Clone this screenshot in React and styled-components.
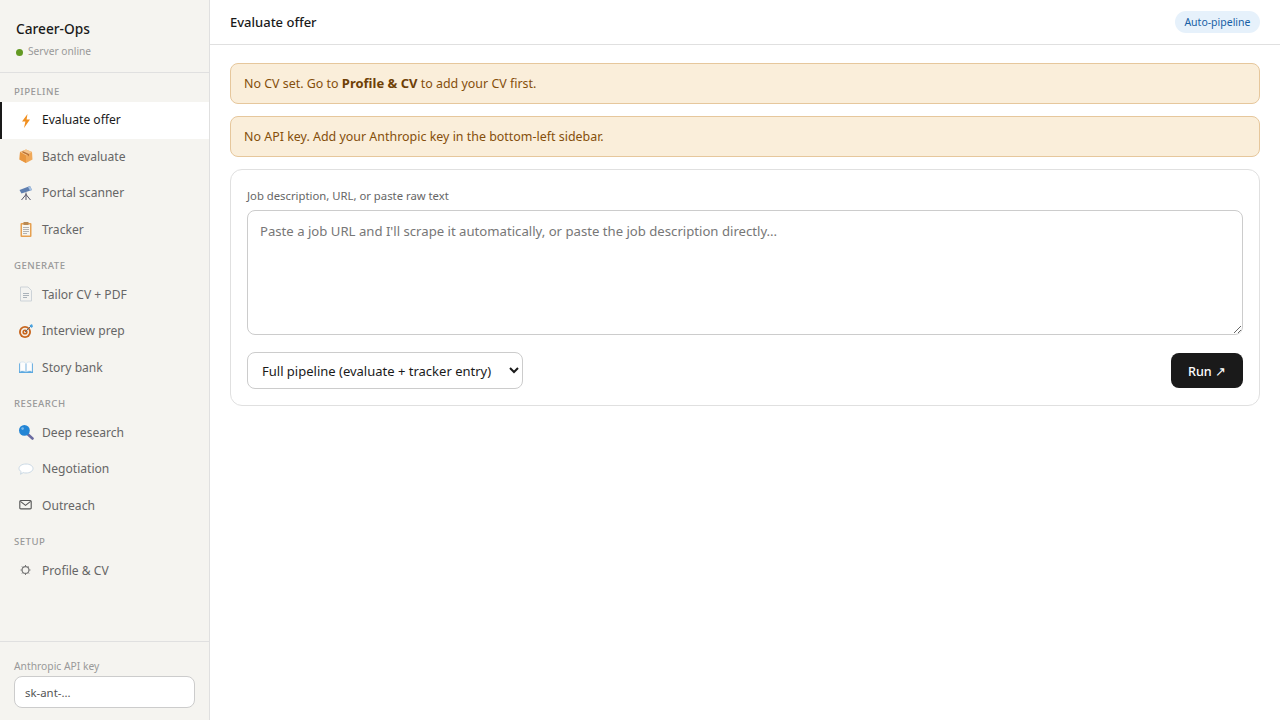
import React from 'react';
import styled, { createGlobalStyle } from 'styled-components';

const Global = createGlobalStyle`
  html, body { margin: 0; padding: 0; height: 100%; }
  body { font-family: "Noto Sans", sans-serif; background: #fff; color: #1a1a1a; }
  * { box-sizing: border-box; }
  #root { height: 720px; }
`;
const Shell = styled.div`display:flex;width:1280px;height:720px;overflow:hidden;`;
const Sidebar = styled.aside`width:210px;flex:none;background:#f5f4f0;border-right:1px solid #e0e0e0;display:flex;flex-direction:column;`;
const Brand = styled.div`padding:19px 16px 12px;height:73px;border-bottom:1px solid #e0e0e0;`;
const BrandName = styled.div`font-size:13.7px;font-weight:500;line-height:20px;`;
const Status = styled.div`display:flex;align-items:center;gap:5px;margin-top:4px;font-size:10.2px;color:#999;line-height:16px;`;
const Dot = styled.span`width:7px;height:7px;border-radius:50%;background:#639922;margin-top:2px;`;
const Nav = styled.nav`flex:1;padding-top:12.5px;`;
const Section = styled.div`font-size:9.6px;font-weight:500;letter-spacing:.5px;color:#999;padding:0 14px;line-height:12px;height:${p=>p.$first?'16.5px':'17px'};margin-top:${p=>p.$first?0:'11.5px'};`;
const Item = styled.div`height:36.5px;display:flex;align-items:center;gap:8px;padding:0 14px 1px 16px;font-size:12.1px;color:${p=>p.$active?'#1a1a1a':'#666'};background:${p=>p.$active?'#fff':'transparent'};border-left:2px solid ${p=>p.$active?'#1a1a1a':'transparent'};`;
const Icon = styled.svg`width:16px;height:16px;flex:none;display:block;`;
const Footer = styled.div`height:79px;border-top:1px solid #e0e0e0;padding:17px 14px 0;`;
const FooterLabel = styled.div`font-size:10.3px;color:#999;line-height:14px;margin-bottom:3px;`;
const KeyInput = styled.input`display:block;width:100%;height:32px;border:1px solid #ccc;border-radius:8px;background:#fff;padding:0 10px;font:11.4px "Noto Sans",sans-serif;&::placeholder{color:#555;opacity:1}`;
const Main = styled.main`flex:1;display:flex;flex-direction:column;min-width:0;`;
const Topbar = styled.header`height:45px;border-bottom:1px solid #e0e0e0;display:flex;align-items:center;justify-content:space-between;padding:0 20px;`;
const Title = styled.h1`margin:0;font-size:13px;font-weight:500;line-height:18px;`;
const Badge = styled.span`height:22px;display:flex;align-items:center;padding:0 9.5px;border-radius:11px;background:#e6f1fb;color:#185fa5;font-size:10.5px;`;
const Content = styled.div`padding:18px 20px;display:flex;flex-direction:column;gap:12px;`;
const Alert = styled.div`height:41px;padding:0 13px;background:#faeeda;border:1px solid #e6c79c;border-radius:8px;color:#854f0b;font-size:12.45px;line-height:39px;white-space:pre;`;
const Strong = styled.b`color:#6e4006;font-weight:700;font-size:13px;`;
const Card = styled.section`border:1px solid #e0e0e0;border-radius:12px;padding:16px;`;
const Label = styled.label`display:block;font-size:11.3px;color:#666;line-height:20px;margin-bottom:4px;`;
const Area = styled.textarea`display:block;width:100%;height:125px;border:1px solid #ccc;border-radius:8px;padding:11px 12px;font:13.15px "Noto Sans",sans-serif;&::placeholder{color:#777;opacity:1}`;
const Row = styled.div`display:flex;justify-content:space-between;align-items:center;margin-top:17px;`;
const Select = styled.select`width:276px;height:37px;border:1px solid #ccc;border-radius:8px;background:#fff;padding:0 10px;font:13px "Noto Sans",sans-serif;color:#1a1a1a;`;
const Run = styled.button`width:72px;height:35px;border:0;border-radius:8px;padding:1px 0 0;background:#1a1a1a;color:#fff;font:500 12.6px "Noto Sans",sans-serif;`;

const glyphs = {
  bolt: <polygon points="9.5,2 4,9.5 7.4,9.5 6,16 12,7.4 8.6,7.4" fill="#f19020"/>,
  box: <><polygon points="8,1.5 14,4 14.5,11.5 8,15 1.5,11.5 2,4" fill="#f0a95a"/><polygon points="8,1.5 14,4 8,7.5 2,4" fill="#f6c68e"/><polygon points="2,4 8,7.5 8,15 1.5,11.5" fill="#e8963f"/><polygon points="4.4,3 11,6 11,8.4 9.6,7 4.4,4.6" fill="#b9733a"/></>,
  scope: <><polygon points="1.5,5 12,1 14,5 3.5,8.5" fill="#5f7fb0"/><polygon points="10,2 12,1 14,5 12,5.7" fill="#a9c4e4"/><path d="M8 7.5V10M8 9.5L3.5 15M8 9.5L12.5 15M8 9.5V15" stroke="#55556a" strokeWidth="1" fill="none"/></>,
  clip: <><rect x="2.5" y="2" width="11" height="14" rx="1" fill="#e6a050"/><rect x="4" y="3.5" width="8" height="11" fill="#f7f5ef"/><rect x="5.5" y="1" width="5" height="3" fill="#b98a55"/><path d="M5 6.5H11M5 8.5H11M5 10.5H11M5 12.5H9" stroke="#a9a9a9" strokeWidth=".9"/></>,
  doc: <><path d="M2.5 1H10L13.5 4.5V15H2.5Z" fill="#f3f3f1" stroke="#cdd3d8"/><path d="M5 7.5H11M5 9.5H11M5 11.5H9" stroke="#aab2ba" strokeWidth="1"/></>,
  target: <><circle cx="7" cy="9" r="6" fill="#c8661e"/><circle cx="7" cy="9" r="4.2" fill="#f6efe6"/><circle cx="7" cy="9" r="2.6" fill="#c8661e"/><circle cx="7" cy="9" r="1" fill="#f6efe6"/><path d="M7 9L13 3" stroke="#5a6a80" strokeWidth="1"/><polygon points="11.5,2.5 14,1 15,3.5 13.5,5" fill="#4aa3e0"/></>,
  book: <><path d="M1 4.5C3.5 3.6 6 3.6 8 5C10 3.6 12.5 3.6 15 4.5V14H1Z" fill="#5aa8e0"/><path d="M2 3.5C4 2.6 6.4 2.8 7.6 4.2V12.8C6.2 11.8 4 11.6 2 12.4Z M14 3.5C12 2.6 9.6 2.8 8.4 4.2V12.8C9.8 11.8 12 11.6 14 12.4Z" fill="#fdfdfd" stroke="#bcd6ea" strokeWidth=".5"/></>,
  search: <><path d="M9.5 10L14.5 14.5" stroke="#6a6aa0" strokeWidth="2.6" strokeLinecap="round"/><circle cx="6.4" cy="6.4" r="5.4" fill="#2385d5"/><circle cx="4.6" cy="4.6" r="1.3" fill="#7ab9ea"/></>,
  bubble: <path d="M8 3C11.9 3 15 4.9 15 7.5S11.9 12 8 12C7 12 6 11.9 5.2 11.6L2.5 13.3L3.2 10.7C1.8 9.8 1 8.7 1 7.5C1 4.9 4.1 3 8 3Z" fill="#fff" stroke="#c5d5e2" strokeWidth=".9"/>,
  mail: <><rect x="1.8" y="3.5" width="11.4" height="8.4" rx="1" fill="none" stroke="#555" strokeWidth="1.1"/><path d="M2.4 4.4L7.5 8.4L12.6 4.4" fill="none" stroke="#555" strokeWidth="1.1"/></>,
  gear: <><circle cx="7.5" cy="8" r="3.4" fill="none" stroke="#777" strokeWidth="1.1"/><path d="M7.5 3V4.6M7.5 11.4V13M2.5 8H4.1M10.9 8H12.5M4 4.5L5.1 5.6M9.9 10.4L11 11.5M11 4.5L9.9 5.6M5.1 10.4L4 11.5" stroke="#777" strokeWidth="1"/></>,
};

const groups=[['PIPELINE',[['bolt','Evaluate offer',1],['box','Batch evaluate'],['scope','Portal scanner'],['clip','Tracker']]],['GENERATE',[['doc','Tailor CV + PDF'],['target','Interview prep'],['book','Story bank']]],['RESEARCH',[['search','Deep research'],['bubble','Negotiation'],['mail','Outreach']]],['SETUP',[['gear','Profile & CV']]]];

export default function App(){return <Shell><Global/><Sidebar><Brand><BrandName>Career-Ops</BrandName><Status><Dot/>Server online</Status></Brand><Nav>{groups.map(([t,items],i)=><div key={t}><Section $first={i===0}>{t}</Section>{items.map(([g,l,a])=><Item key={l} $active={a}><Icon viewBox="0 0 16 16">{glyphs[g]}</Icon>{l}</Item>)}</div>)}</Nav><Footer><FooterLabel>Anthropic API key</FooterLabel><KeyInput placeholder="sk-ant-..."/></Footer></Sidebar><Main><Topbar><Title>Evaluate offer</Title><Badge>Auto-pipeline</Badge></Topbar><Content><Alert>No CV set. Go to <Strong>Profile &amp; CV</Strong> to add your CV first.</Alert><Alert>No API key. Add your Anthropic key in the bottom-left sidebar.</Alert><Card><Label>Job description, URL, or paste raw text</Label><Area placeholder="Paste a job URL and I'll scrape it automatically, or paste the job description directly..."/><Row><Select><option>Full pipeline (evaluate + tracker entry)</option></Select><Run>Run ↗</Run></Row></Card></Content></Main></Shell>}
